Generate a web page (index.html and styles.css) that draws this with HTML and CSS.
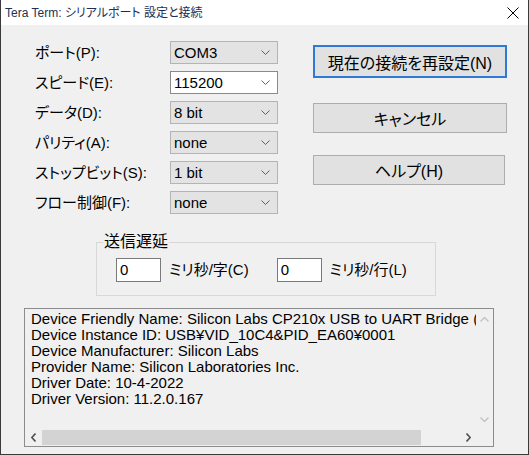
FILE: index.html
```html
<!DOCTYPE html>
<html lang="ja">
<head>
<meta charset="utf-8">
<link rel="stylesheet" href="styles.css">
</head>
<body>
<div class="window">
  <div class="titlebar">
    <span class="title">Tera Term: シリアルポート 設定と接続</span>
    <svg class="close" width="12" height="12" viewBox="0 0 12 12"><path d="M0.5 0.5 L11.5 11.5 M11.5 0.5 L0.5 11.5" stroke="#000" stroke-width="1" fill="none"/></svg>
  </div>
  <div class="content">
    <div class="top">
      <div class="form">
        <span class="lbl">ポート(P):</span>
        <div class="combo list"><span>COM3</span><svg class="chev" width="9" height="5" viewBox="0 0 9 5"><polyline points="0.5,0.5 4.5,4.5 8.5,0.5" fill="none" stroke="#606060"/></svg></div>
        <span class="lbl">スピード(E):</span>
        <div class="combo edit"><span>115200</span><svg class="chev" width="9" height="5" viewBox="0 0 9 5"><polyline points="0.5,0.5 4.5,4.5 8.5,0.5" fill="none" stroke="#606060"/></svg></div>
        <span class="lbl">データ(D):</span>
        <div class="combo list"><span>8 bit</span><svg class="chev" width="9" height="5" viewBox="0 0 9 5"><polyline points="0.5,0.5 4.5,4.5 8.5,0.5" fill="none" stroke="#606060"/></svg></div>
        <span class="lbl">パリティ(A):</span>
        <div class="combo list"><span>none</span><svg class="chev" width="9" height="5" viewBox="0 0 9 5"><polyline points="0.5,0.5 4.5,4.5 8.5,0.5" fill="none" stroke="#606060"/></svg></div>
        <span class="lbl">ストップビット(S):</span>
        <div class="combo list"><span>1 bit</span><svg class="chev" width="9" height="5" viewBox="0 0 9 5"><polyline points="0.5,0.5 4.5,4.5 8.5,0.5" fill="none" stroke="#606060"/></svg></div>
        <span class="lbl">フロー制御(F):</span>
        <div class="combo list"><span>none</span><svg class="chev" width="9" height="5" viewBox="0 0 9 5"><polyline points="0.5,0.5 4.5,4.5 8.5,0.5" fill="none" stroke="#606060"/></svg></div>
      </div>
      <div class="buttons">
        <div class="btn default">現在の接続を再設定(N)</div>
        <div class="btn cancel">キャンセル</div>
        <div class="btn help">ヘルプ(H)</div>
      </div>
    </div>
    <fieldset class="delay">
      <legend>送信遅延</legend>
      <div class="delay-row">
        <div class="field">0</div><span class="unit">ミリ秒/字(C)</span>
        <div class="field">0</div><span class="unit">ミリ秒/行(L)</span>
      </div>
    </fieldset>
    <div class="info">
      <div class="info-text">
        <div>Device Friendly Name: Silicon Labs CP210x USB to UART Bridge (COM3)</div>
        <div>Device Instance ID: USB¥VID_10C4&amp;PID_EA60¥0001</div>
        <div>Device Manufacturer: Silicon Labs</div>
        <div>Provider Name: Silicon Laboratories Inc.</div>
        <div>Driver Date: 10-4-2022</div>
        <div>Driver Version: 11.2.0.167</div>
      </div>
      <div class="vscroll">
        <svg width="9" height="5" viewBox="0 0 9 5"><polyline points="0.5,4.5 4.5,0.5 8.5,4.5" fill="none" stroke="#c0c0c0" stroke-width="1.3"/></svg>
        <svg width="9" height="5" viewBox="0 0 9 5"><polyline points="0.5,0.5 4.5,4.5 8.5,0.5" fill="none" stroke="#c0c0c0" stroke-width="1.3"/></svg>
      </div>
      <div class="hscroll">
        <svg class="arrow" width="5" height="9" viewBox="0 0 5 9"><polyline points="4.5,0.5 0.8,4.5 4.5,8.5" fill="none" stroke="#505050" stroke-width="1.6"/></svg>
        <div class="track"><div class="thumb"></div></div>
        <svg class="arrow" width="5" height="9" viewBox="0 0 5 9"><polyline points="0.5,0.5 4.2,4.5 0.5,8.5" fill="none" stroke="#505050" stroke-width="1.6"/></svg>
      </div>
      <div class="corner"></div>
    </div>
  </div>
</div>
</body>
</html>
```

FILE: styles.css
```css
html, body {
  margin: 0;
  padding: 0;
  background: #f0f0f0;
}

body {
  font-family: "Liberation Sans", "Noto Sans CJK JP", sans-serif;
  font-feature-settings: "palt" 1;
  color: #000;
}

.window {
  width: 529px;
  height: 455px;
  box-sizing: border-box;
  border-left: 1px solid #3a3a3a;
  border-right: 1px solid #3a3a3a;
  border-bottom: 1px solid #3a3a3a;
  background: #f0f0f0;
  display: flex;
  flex-direction: column;
  overflow: hidden;
}

.titlebar {
  height: 25px;
  flex: none;
  background: #fff;
  display: flex;
  align-items: center;
  padding-left: 4px;
  padding-right: 9px;
}

.title {
  flex: 1;
  font-size: 12px;
  line-height: 14px;
  color: #1c2f55;
  padding-top: 1px;
}

.close {
  display: block;
}

.content {
  display: flex;
  flex-direction: column;
  padding: 16px 0 0 23px;
}

.top {
  display: flex;
}

.form {
  margin-left: 11px;
  display: grid;
  grid-template-columns: 135px 108px;
  grid-auto-rows: 23px;
  row-gap: 7px;
  align-items: center;
}

.lbl {
  font-size: 15px;
  line-height: 18px;
  white-space: nowrap;
}

.combo {
  height: 23px;
  box-sizing: border-box;
  display: flex;
  align-items: center;
  justify-content: space-between;
  padding: 0 7px 0 3px;
  font-size: 15px;
}

.combo.list {
  background: #e3e3e3;
  border: 1px solid #b4b4b4;
}

.combo.edit {
  background: #fff;
  border: 1px solid #8a8a8a;
}

.chev {
  display: block;
}

.buttons {
  margin-left: 35px;
  display: flex;
  flex-direction: column;
  padding-top: 4px;
}

.btn {
  width: 194px;
  box-sizing: border-box;
  background: #e1e1e1;
  border: 1px solid #adadad;
  display: flex;
  align-items: center;
  justify-content: center;
  font-size: 16px;
}

.btn.default {
  height: 33px;
  border: 2px solid #2f7ad6;
}

.btn.cancel {
  height: 30px;
  margin-top: 25px;
}

.btn.help {
  width: 192px;
  height: 30px;
  margin-top: 22px;
}

.delay {
  margin: 18px 0 0 72px;
  width: 338px;
  box-sizing: border-box;
  border: 1px solid #d8d8d8;
  padding: 0 0 13px 6px;
}

.delay legend {
  font-size: 16px;
  line-height: 20px;
  padding: 0 1px;
}

.delay-row {
  display: flex;
  align-items: center;
  margin: 6px 0 0 13px;
  white-space: nowrap;
}

.field {
  flex: none;
  width: 45px;
  height: 24px;
  box-sizing: border-box;
  background: #fff;
  border: 1px solid #7a7a7a;
  font-size: 15px;
  line-height: 22px;
  padding-left: 3px;
}

.unit {
  flex: none;
  font-size: 15px;
  line-height: 18px;
  margin-left: 8px;
  margin-right: 28px;
}

.info {
  margin-top: 12px;
  width: 470px;
  height: 139px;
  box-sizing: border-box;
  border: 1px solid #8c8c8c;
  display: grid;
  grid-template-columns: 1fr 17px;
  grid-template-rows: 1fr 17px;
  overflow: hidden;
}

.info-text {
  padding: 2px 0 0 6px;
  font-size: 15px;
  line-height: 16px;
  white-space: nowrap;
  overflow: hidden;
  min-width: 0;
}

.vscroll {
  display: flex;
  flex-direction: column;
  justify-content: space-between;
  align-items: center;
  padding: 8px 0 7px;
}

.vscroll svg, .hscroll svg {
  display: block;
}

.hscroll {
  display: flex;
  align-items: center;
  padding: 0 5px 0 6px;
}

.track {
  flex: 1;
  height: 15px;
  margin: 0 6px;
  display: flex;
}

.thumb {
  flex: none;
  width: 379px;
  height: 15px;
  background: #d3d3d3;
}

.corner {
  background: #f0f0f0;
}
```
